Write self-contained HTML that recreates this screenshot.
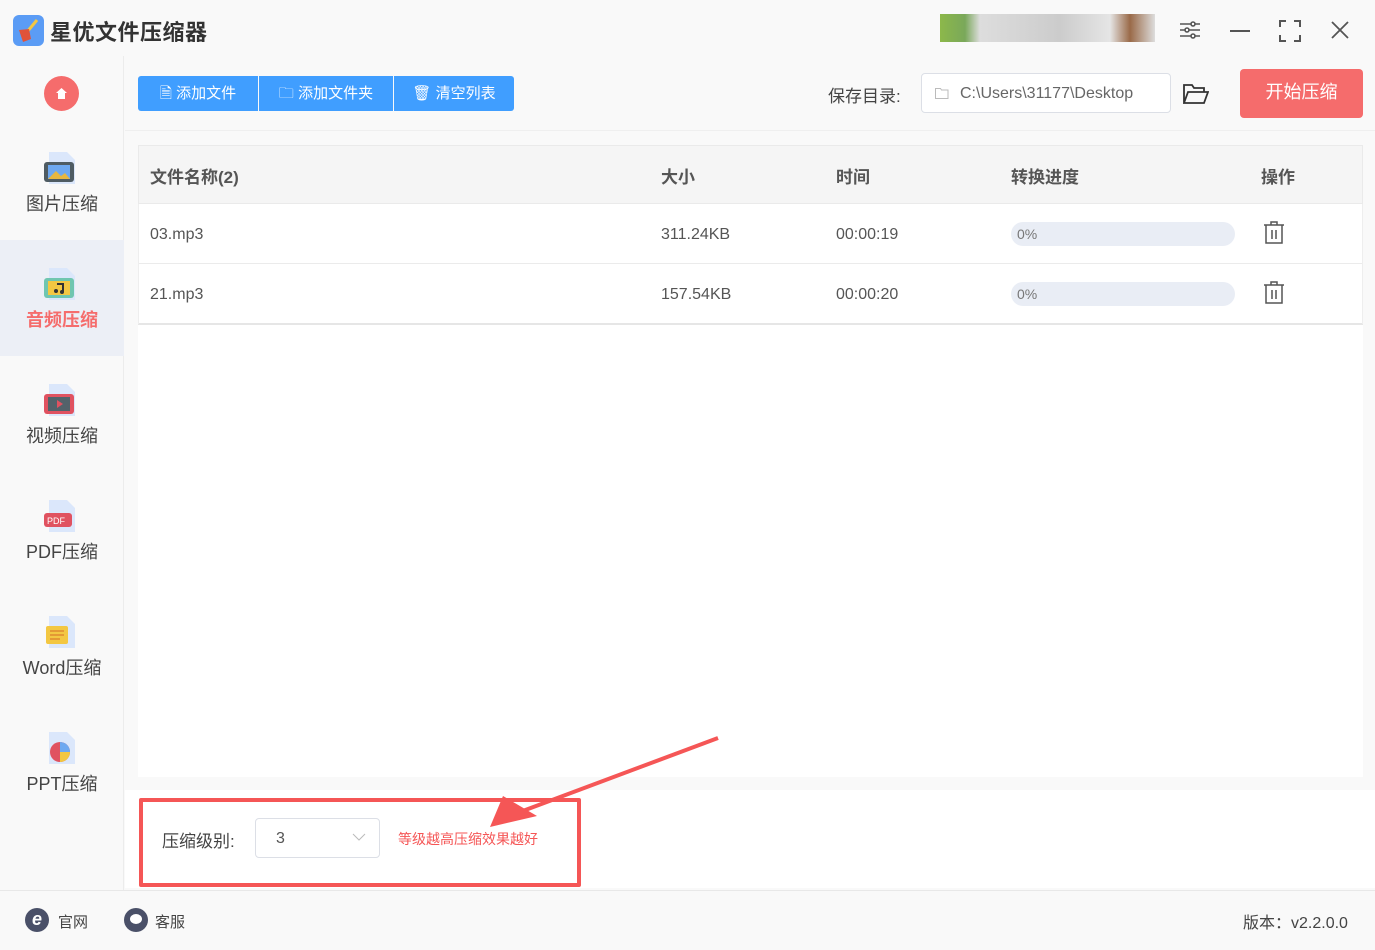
<!DOCTYPE html>
<html><head><meta charset="utf-8"><style>
*{margin:0;padding:0;box-sizing:border-box}
body{width:1375px;height:950px;background:#f9f9f9;font-family:"Liberation Sans","Noto Sans CJK SC",sans-serif;position:relative;overflow:hidden;color:#333}
.a{position:absolute}
.side{left:0;top:56px;width:124px;height:834px;background:#f9f9f9;border-right:1px solid #ececec}
.nav{position:absolute;left:0;width:124px;height:116px;text-align:center;font-size:18px;color:#444}
.nav .ic{position:absolute;left:43px;top:26px;width:36px;height:36px}
.nav span{position:absolute;left:0;right:0;top:66px}
.btn{top:76px;height:35px;background:#409eff;color:#fff;font-size:15px;line-height:35px;text-align:center}
.th{font-size:17px;font-weight:bold;color:#555;top:163px}
.td{font-size:16px;color:#555}
.bar{width:224px;height:24px;border-radius:12px;background:#e9edf5;font-size:14px;color:#777;line-height:24px;padding-left:6px}
</style></head><body>
<div class="a" style="left:13px;top:15px;width:31px;height:31px;border-radius:6px;background:#5b9cf5"></div>
<svg class="a" style="left:13px;top:15px" width="31" height="31"><path d="M24 5 L14 17" stroke="#f3c742" stroke-width="3"/><path d="M6 15 L16 14 L18 24 L10 27 Z" fill="#e0533a"/></svg>
<div class="a" style="left:50px;top:15px;font-size:22px;font-weight:bold;color:#333;letter-spacing:0.5px">星优文件压缩器</div>
<div class="a" style="left:940px;top:14px;width:215px;height:28px;background:linear-gradient(90deg,#8cb84a 0,#7aa85a 25px,#ddd 40px,#ccc 120px,#e5e5e5 170px,#9a6a48 190px,#ddd 215px)"></div>
<svg class="a" style="left:1178px;top:18px" width="24" height="24" stroke="#555" stroke-width="1.6" fill="none"><path d="M2 6h20M2 12h20M2 18h20"/><circle cx="15" cy="6" r="2" fill="#fff"/><circle cx="9" cy="12" r="2" fill="#fff"/><circle cx="15" cy="18" r="2" fill="#fff"/></svg>
<div class="a" style="left:1230px;top:30px;width:20px;height:2px;background:#555"></div>
<svg class="a" style="left:1279px;top:20px" width="22" height="22" stroke="#555" stroke-width="2" fill="none"><path d="M1 7V1h6M15 1h6v6M21 15v6h-6M7 21H1v-6"/></svg>
<svg class="a" style="left:1331px;top:21px" width="18" height="18" stroke="#555" stroke-width="1.8"><path d="M1 1L17 17M17 1L1 17"/></svg>

<div class="a side"></div>
<div class="a" style="left:44px;top:76px;width:35px;height:35px;border-radius:50%;background:#f56c6c"></div>
<svg class="a" style="left:54px;top:86px" width="15" height="15"><path d="M7.5 2L2 7h2v6h7V7h2z" fill="#fff"/></svg>
<div class="nav" style="top:124px"><svg class="ic" viewBox="0 0 36 36"><path d="M6 2h18l8 8v24H6z" fill="#dbe7fb"/><rect x="1" y="12" width="30" height="20" rx="3" fill="#4f5c63"/><rect x="5" y="15" width="22" height="14" fill="#6ea8f0"/><path d="M5 29l8-8 5 5 4-3 5 6z" fill="#e8b740"/></svg><span>图片压缩</span></div>
<div class="nav" style="top:240px;background:#eceff6;color:#f56c6c;font-weight:bold"><svg class="ic" viewBox="0 0 36 36"><path d="M6 2h18l8 8v24H6z" fill="#dbe7fb"/><rect x="1" y="12" width="30" height="20" rx="3" fill="#6fc6b0"/><rect x="5" y="15" width="22" height="14" fill="#f3c742"/><path d="M14 18h6v8" stroke="#333" stroke-width="2" fill="none"/><circle cx="13" cy="25" r="2" fill="#333"/><circle cx="19" cy="26" r="2" fill="#333"/></svg><span>音频压缩</span></div>
<div class="nav" style="top:356px"><svg class="ic" viewBox="0 0 36 36"><path d="M6 2h18l8 8v24H6z" fill="#dbe7fb"/><rect x="1" y="12" width="30" height="20" rx="3" fill="#e05260"/><rect x="5" y="15" width="22" height="14" fill="#53626a"/><path d="M14 18l6 4-6 4z" fill="#e05260"/></svg><span>视频压缩</span></div>
<div class="nav" style="top:472px"><svg class="ic" viewBox="0 0 36 36"><path d="M6 2h18l8 8v24H6z" fill="#dbe7fb"/><rect x="1" y="15" width="28" height="14" rx="3" fill="#e05260"/><text x="4" y="26" font-size="9" fill="#fff" font-family="Liberation Sans">PDF</text></svg><span>PDF压缩</span></div>
<div class="nav" style="top:588px"><svg class="ic" viewBox="0 0 36 36"><path d="M6 2h18l8 8v24H6z" fill="#dbe7fb"/><rect x="3" y="12" width="22" height="18" rx="2" fill="#f3c742"/><path d="M7 17h14M7 21h14M7 25h10" stroke="#e08a30" stroke-width="1.5"/></svg><span>Word压缩</span></div>
<div class="nav" style="top:704px"><svg class="ic" viewBox="0 0 36 36"><path d="M6 2h18l8 8v24H6z" fill="#dbe7fb"/><circle cx="17" cy="22" r="10" fill="#e05260"/><path d="M17 22V12a10 10 0 0 1 10 10z" fill="#6ea8f0"/><path d="M17 22h10a10 10 0 0 1-10 10z" fill="#f3c742"/></svg><span>PPT压缩</span></div>

<div class="a btn" style="left:138px;width:120px;border-radius:3px 0 0 3px">🗎 添加文件</div>
<div class="a btn" style="left:259px;width:134px">🗀 添加文件夹</div>
<div class="a btn" style="left:394px;width:120px;border-radius:0 3px 3px 0">🗑 清空列表</div>
<div class="a" style="left:828px;top:82px;font-size:17px;color:#444">保存目录:</div>
<div class="a" style="left:921px;top:73px;width:250px;height:40px;background:#fff;border:1px solid #dcdfe6;border-radius:4px;font-size:16px;color:#666;line-height:40px;padding-left:38px">C:\Users\31177\Desktop</div>
<svg class="a" style="left:935px;top:87px" width="14" height="12" stroke="#bbb" fill="none"><path d="M.5 1.5h5l1 1.5h6.5v8.5H.5z"/></svg>
<svg class="a" style="left:1183px;top:83px" width="26" height="22" stroke="#333" stroke-width="1.8" fill="none"><path d="M1 20V2h8l2 3h10v4M1 20l4-11h20l-4 11z"/></svg>
<div class="a" style="left:1240px;top:69px;width:123px;height:49px;background:#f56c6c;border-radius:4px;color:#fff;font-size:18px;line-height:47px;text-align:center">开始压缩</div>
<div class="a" style="left:125px;top:130px;width:1250px;height:1px;background:#efefef"></div>

<div class="a" style="left:138px;top:145px;width:1225px;height:632px;background:#fff"></div>
<div class="a" style="left:138px;top:145px;width:1225px;height:59px;background:#f5f5f5;border:1px solid #eaeaea"></div>
<div class="a th" style="left:150px">文件名称(2)</div><div class="a th" style="left:661px">大小</div><div class="a th" style="left:836px">时间</div><div class="a th" style="left:1011px">转换进度</div><div class="a th" style="left:1261px">操作</div>
<div class="a" style="left:138px;top:263px;width:1225px;height:1px;background:#ebebeb"></div>
<div class="a" style="left:138px;top:323px;width:1225px;height:2px;background:#e6e6e6"></div>
<div class="a" style="left:138px;top:204px;width:1px;height:120px;background:#eee"></div><div class="a" style="left:1362px;top:204px;width:1px;height:120px;background:#eee"></div>
<div class="a td" style="left:150px;top:226px">03.mp3</div><div class="a td" style="left:661px;top:226px">311.24KB</div><div class="a td" style="left:836px;top:226px">00:00:19</div>
<div class="a bar" style="left:1011px;top:222px">0%</div>
<div class="a td" style="left:150px;top:286px">21.mp3</div><div class="a td" style="left:661px;top:286px">157.54KB</div><div class="a td" style="left:836px;top:286px">00:00:20</div>
<div class="a bar" style="left:1011px;top:282px">0%</div>
<svg class="a" style="left:1263px;top:221px" width="22" height="24" stroke="#555" stroke-width="1.5" fill="none"><path d="M1 4h20M8 4V1h6v3M3 4v18h16V4M9 9v9M13 9v9"/></svg>
<svg class="a" style="left:1263px;top:281px" width="22" height="24" stroke="#555" stroke-width="1.5" fill="none"><path d="M1 4h20M8 4V1h6v3M3 4v18h16V4M9 9v9M13 9v9"/></svg>

<div class="a" style="left:125px;top:790px;width:1250px;height:98px;background:#fff"></div>
<div class="a" style="left:139px;top:798px;width:442px;height:89px;border:4px solid #f55656;border-radius:2px"></div>
<div class="a" style="left:162px;top:827px;font-size:17px;color:#444">压缩级别:</div>
<div class="a" style="left:255px;top:818px;width:125px;height:40px;border:1px solid #dcdfe6;border-radius:4px;font-size:16px;color:#555;line-height:40px;padding-left:20px">3</div>
<svg class="a" style="left:352px;top:833px" width="14" height="9" stroke="#bbb" fill="none"><path d="M1 1l6 6 6-6"/></svg>
<div class="a" style="left:398px;top:829px;font-size:14px;color:#f55656">等级越高压缩效果越好</div>
<svg class="a" style="left:0;top:0" width="1375" height="950"><path d="M718 738 L520 812" stroke="#f55656" stroke-width="4"/><path d="M490 827 L503 796 L537 816 Z" fill="#f55656"/></svg>

<div class="a" style="left:0;top:890px;width:1375px;height:1px;background:#e8e8e8"></div>
<div class="a" style="left:25px;top:908px;width:24px;height:24px;border-radius:50%;background:#4a5068;color:#fff;font-size:18px;font-style:italic;font-weight:bold;text-align:center;line-height:23px">e</div>
<div class="a" style="left:58px;top:911px;font-size:15px;color:#444">官网</div>
<div class="a" style="left:124px;top:908px;width:24px;height:24px;border-radius:50%;background:#4a5068"></div>
<div class="a" style="left:130px;top:914px;width:12px;height:10px;border-radius:50%;background:#fff"></div>
<div class="a" style="left:155px;top:911px;font-size:15px;color:#444">客服</div>
<div class="a" style="left:1243px;top:909px;font-size:16px;color:#444">版本：v2.2.0.0</div>
</body></html>
